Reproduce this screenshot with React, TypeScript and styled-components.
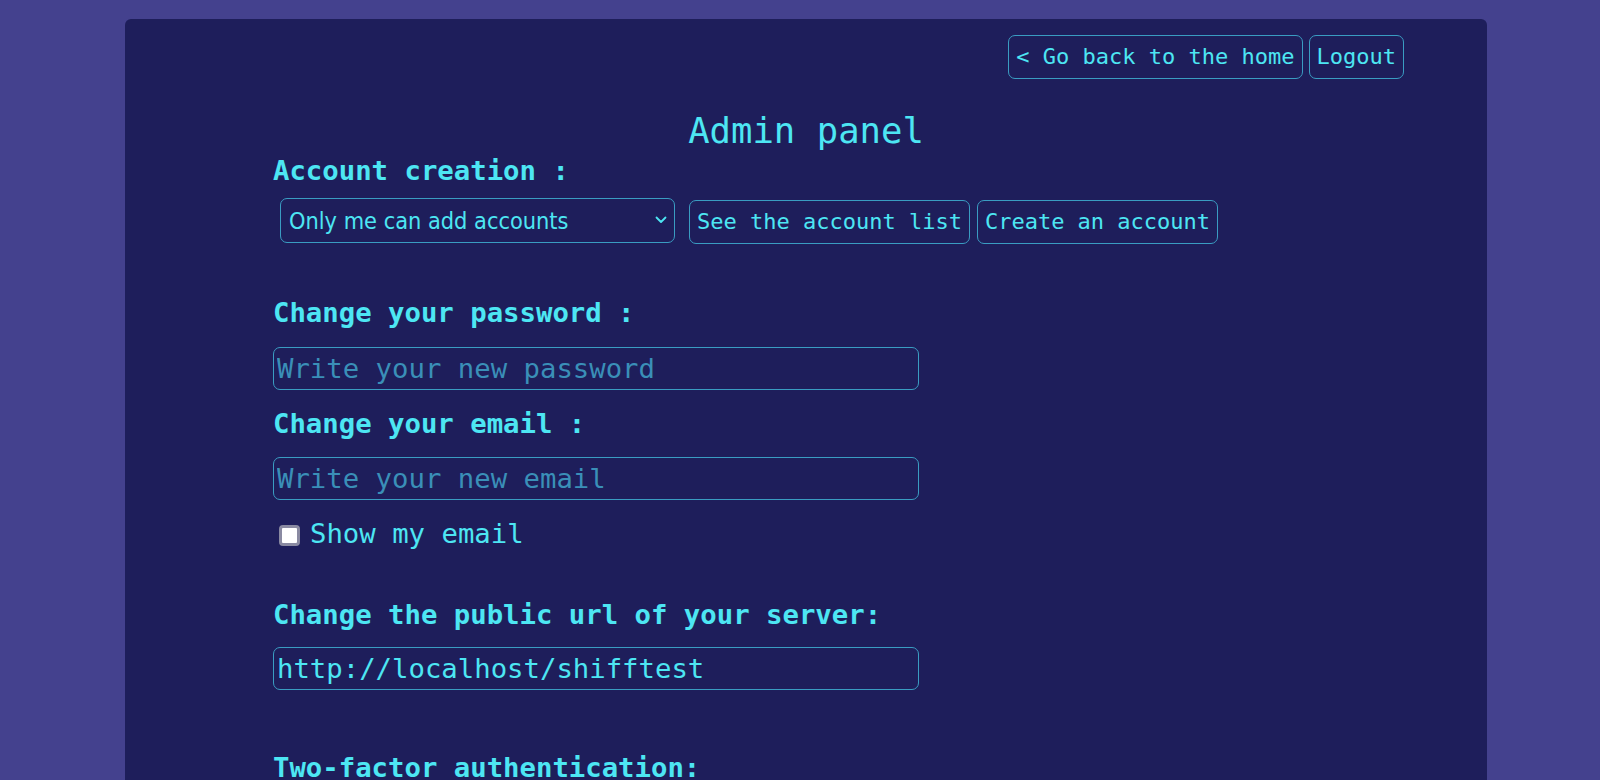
import React from "react";
import styled, { createGlobalStyle } from "styled-components";

const GlobalStyle = createGlobalStyle`
  html, body {
    margin: 0;
    padding: 0;
    background: #44418e;
  }
  body {
    font-family: "DejaVu Sans Mono", monospace;
    color: #4de6f3;
    overflow: hidden;
  }
`;

const Page = styled.div`
  padding: 19px 0 0 125px;
`;

const Panel = styled.main`
  width: 1362px;
  min-height: 900px;
  box-sizing: border-box;
  padding-top: 15.5px;
  background: #1e1e5b;
  border-radius: 6px;
`;

const TopBar = styled.nav`
  display: flex;
  justify-content: flex-end;
  gap: 6px;
  padding-right: 83px;
`;

const Button = styled.button`
  height: 44px;
  padding: 0 7px;
  box-sizing: border-box;
  font-family: "DejaVu Sans Mono", monospace;
  font-size: 22px;
  line-height: 1;
  color: #4de6f3;
  background: transparent;
  border: 1px solid #3a9cc2;
  border-radius: 7px;
  cursor: pointer;
`;

const Title = styled.h1`
  margin: 31.5px 0 0;
  font-size: 35.6px;
  line-height: 41.5px;
  font-weight: 400;
  text-align: center;
`;

const Content = styled.section`
  margin-left: 148px;
  display: flex;
  flex-direction: column;
  align-items: flex-start;
`;

const Label = styled.h2<{ $gap: number }>`
  margin: ${(p) => p.$gap}px 0 0;
  font-size: 27.3px;
  line-height: 32px;
  font-weight: 700;
`;

const Row = styled.div`
  display: flex;
  align-items: flex-start;
  margin-top: 11px;
`;

const SelectWrap = styled.div`
  position: relative;
  margin: 0 14px 0 7px;
`;

const Select = styled.select`
  appearance: none;
  width: 395px;
  height: 45px;
  box-sizing: border-box;
  padding: 0 30px 0 8px;
  font-family: "DejaVu Sans Condensed", "DejaVu Sans", sans-serif;
  font-stretch: condensed;
  font-size: 23.3px;
  color: #4de6f3;
  background: transparent;
  border: 1px solid #3a9cc2;
  border-radius: 7px;
  outline: none;

  option {
    background: #1e1e5b;
  }
`;

const Chevron = styled.svg`
  position: absolute;
  right: 8px;
  top: 18px;
  width: 12px;
  height: 8px;
  pointer-events: none;
`;

const ButtonGroup = styled.div`
  display: flex;
  gap: 7px;
  margin-top: 2px;
`;

const TextInput = styled.input<{ $gap: number }>`
  width: 646px;
  height: 43px;
  box-sizing: border-box;
  margin: ${(p) => p.$gap}px 0 0;
  padding: 0 3px;
  font-family: "DejaVu Sans Mono", monospace;
  font-size: 27.3px;
  color: #4de6f3;
  background: transparent;
  border: 1px solid #3a9cc2;
  border-radius: 7px;
  outline: none;

  &::placeholder {
    color: #3a8fb8;
    opacity: 1;
  }
`;

const CheckRow = styled.label`
  display: flex;
  align-items: center;
  margin-top: 17.7px;
  font-size: 27.3px;
  line-height: 32px;
`;

const Checkbox = styled.input`
  appearance: none;
  width: 21px;
  height: 21px;
  box-sizing: border-box;
  margin: 3px 10px 0 6px;
  background: #ffffff;
  border: 3px solid #8a8aa2;
  border-radius: 4px;
`;

export default function App() {
  return (
    <>
      <GlobalStyle />
      <Page>
        <Panel>
          <TopBar>
            <Button>&lt; Go back to the home</Button>
            <Button>Logout</Button>
          </TopBar>
          <Title>Admin panel</Title>
          <Content>
            <Label $gap={3.5}>Account creation :</Label>
            <Row>
              <SelectWrap>
                <Select defaultValue="me">
                  <option value="me">Only me can add accounts</option>
                  <option value="all">Everyone can create an account</option>
                </Select>
                <Chevron viewBox="0 0 12 8">
                  <path
                    d="M1.5 1.5 L6 6 L10.5 1.5"
                    fill="none"
                    stroke="#4de6f3"
                    strokeWidth="1.8"
                    strokeLinecap="round"
                    strokeLinejoin="round"
                  />
                </Chevron>
              </SelectWrap>
              <ButtonGroup>
                <Button>See the account list</Button>
                <Button>Create an account</Button>
              </ButtonGroup>
            </Row>

            <Label $gap={53}>Change your password :</Label>
            <TextInput $gap={18} type="password" placeholder="Write your new password" />

            <Label $gap={17.5}>Change your email :</Label>
            <TextInput $gap={17.5} type="email" placeholder="Write your new email" />

            <CheckRow>
              <Checkbox type="checkbox" />
              Show my email
            </CheckRow>

            <Label $gap={49.3}>Change the public url of your server:</Label>
            <TextInput $gap={16} type="text" defaultValue="http://localhost/shifftest" />

            <Label $gap={62}>Two-factor authentication:</Label>
          </Content>
        </Panel>
      </Page>
    </>
  );
}
